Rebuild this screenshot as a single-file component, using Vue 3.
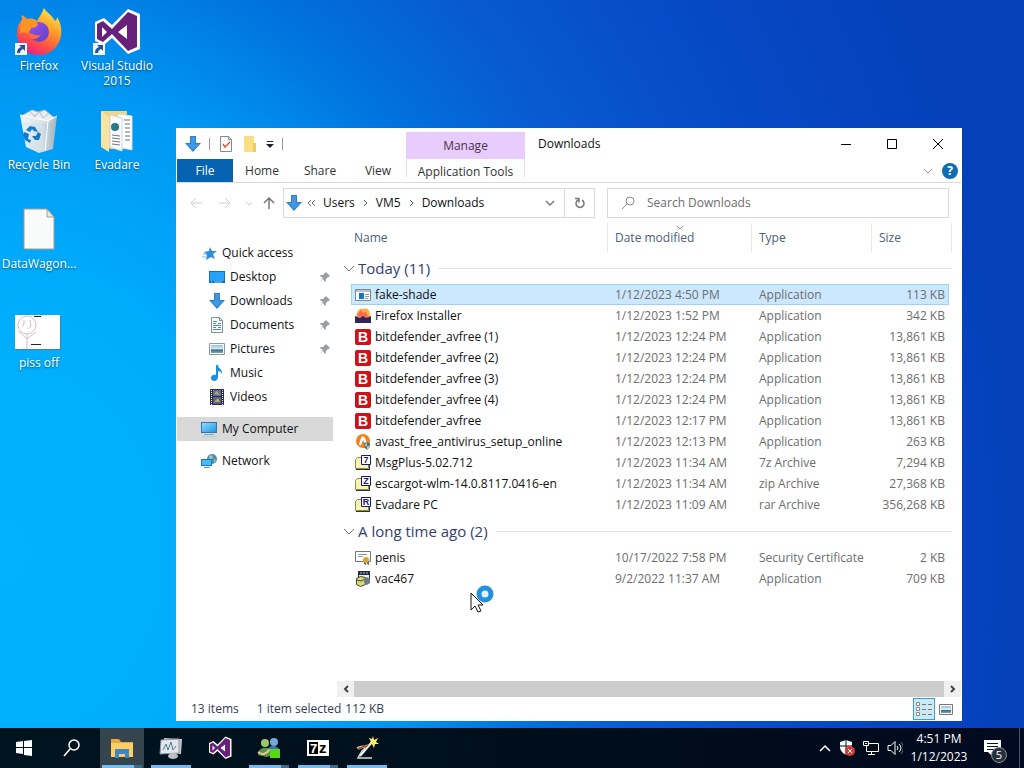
<template>
  <div class="desktop">
    <!-- shared icon shapes -->
    <svg class="sprite" aria-hidden="true">
      <defs>
        <linearGradient id="fox" x1="0.8" y1="0" x2="0.3" y2="1">
          <stop offset="0" stop-color="#fff04a" />
          <stop offset="0.4" stop-color="#ff9a2a" />
          <stop offset="0.75" stop-color="#ff4a4a" />
          <stop offset="1" stop-color="#e8208a" />
        </linearGradient>
        <linearGradient id="globe" x1="0" y1="0" x2="1" y2="1">
          <stop offset="0" stop-color="#a050f0" />
          <stop offset="1" stop-color="#5a40c8" />
        </linearGradient>
        <linearGradient id="bin" x1="0" y1="0" x2="1" y2="0">
          <stop offset="0" stop-color="#f4f5f6" />
          <stop offset="0.6" stop-color="#dfe3e6" />
          <stop offset="1" stop-color="#a9b3ba" />
        </linearGradient>
        <linearGradient id="screen" x1="0" y1="0" x2="1" y2="1">
          <stop offset="0" stop-color="#8fdcff" />
          <stop offset="1" stop-color="#2196e3" />
        </linearGradient>
        <linearGradient id="photo" x1="0" y1="0" x2="0" y2="1">
          <stop offset="0" stop-color="#8fc4ea" />
          <stop offset="0.5" stop-color="#dceaf2" />
          <stop offset="0.6" stop-color="#356b84" />
          <stop offset="1" stop-color="#7fa6b6" />
        </linearGradient>
      </defs>

      <symbol id="i-shortcut" viewBox="0 0 12 12">
        <rect width="12" height="12" fill="#f6f8fb" />
        <path d="M4 2h6v6L8 6C6 7 5 8 5 10H2C2 7 3 5 6 4z" fill="#24509c" />
      </symbol>

      <symbol id="i-firefox" viewBox="0 0 48 48">
        <path d="M29 0c2 4 8 7 11 13 2-1 2-3 2-4 4 6 5 13 4 19-2 11-11 19-22 19C11 47 2 38 2 25c0-6 2-10 5-13 0-2-1-4 0-5 2 1 4 3 5 4 4-1 8 0 10 2 3-5 5-8 7-13z" fill="url(#fox)" />
        <circle cx="24" cy="24" r="10" fill="url(#globe)" />
        <path d="M7 12c6-2 12 0 16 4-1 3-4 4-7 4 0 3-3 3-3 6-3-2-6-2-8 0 0-6 0-10 2-14z" fill="#ff9324" />
        <path d="M13 24c4 2 8 4 13 3-3 4-8 5-11 3z" fill="#ff6a35" />
      </symbol>

      <symbol id="i-vs" viewBox="0 0 48 48">
        <path d="M2 14l9-4 8 7L35 1l12 5v35l-12 5-16-16-8 7-9-4z" fill="#fff" />
        <path d="M4 16l6-3 9 8L35 4l9 4v31l-9 4-16-17-9 8-6-3zM9 19v10l5-5zM34 17l-9 7 9 7z" fill="#68217a" fill-rule="evenodd" />
      </symbol>

      <symbol id="i-recycle" viewBox="0 0 48 48">
        <path d="M8 8l9-5 6 2 7-2 7 6 4 2-2 6-31-2z" fill="#e8edf0" stroke="#aeb9c0" />
        <path d="M15 4l4 5 6-4 3 6 6-5M10 9l6 4 5-4" fill="none" stroke="#b3bec6" />
        <path d="M5 8l28 6 9-5-4 33-14 4-13-6z" fill="url(#bin)" opacity=".94" />
        <path d="M5 8l28 6 9-5M33 14l-3 30" fill="none" stroke="#fff" />
        <path d="M11 23l4-4 5 1 3 5-4-1-2-2-2 3zM20 33l4 0 2-6-3-2-2 4h-4zM9 25l5 2-1 5 3 1-1 3-5-3-2-5z" fill="#1478cc" />
      </symbol>

      <symbol id="i-folder-open" viewBox="0 0 48 48">
        <path d="M8 4h26v38H18L8 38z" fill="#efd585" />
        <path d="M25 7l14 2v34l-14-3z" fill="#fff" stroke="#d8dde0" />
        <path d="M31 13h6m-5 4h5m-5 4h5m-5 4h5m-5 4h5m-5 4h5" stroke="#626c74" />
        <path d="M17 8l12 3v33l-12-4z" fill="#fafafa" stroke="#d2d7d9" />
        <circle cx="22" cy="20" r="4" fill="#27788b" />
        <path d="M19 28l8 1m-8 2l8 1m-8 2l8 1m-8 2l8 1" stroke="#737b80" />
        <path d="M8 4l8 6v35l-8-5z" fill="#f8e4a0" />
      </symbol>

      <symbol id="i-file" viewBox="0 0 48 48">
        <path d="M9 3h23l7 8v32H9z" fill="#f9fbfb" stroke="#a89c90" />
        <path d="M32 3v8h7z" fill="#e7e9ea" stroke="#a89c90" />
      </symbol>

      <symbol id="i-drawing" viewBox="0 0 48 48">
        <path d="M1 12h45v33H1z" fill="#59707c" opacity=".6" />
        <path d="M0 10h45v34H0z" fill="#fff" />
        <g fill="none" stroke="#d8bfc2">
          <circle cx="12" cy="20" r="9" />
          <path d="M9 15v4l-2 3M15 15l1 6-3 3M12 29v15M3 26l9 8 9-7" />
        </g>
        <path d="M19 11.500h7M16 39.500h10" stroke="#222" />
      </symbol>

      <symbol id="i-down" viewBox="0 0 16 16">
        <path d="M5 0h6v7h5l-8 9-8-9h5z" fill="#2b7fd0" />
        <path d="M6 1h4v7h4l-6 6-6-6h4z" fill="#4296e2" />
      </symbol>

      <symbol id="i-check" viewBox="0 0 16 16">
        <path d="M2.500 .5h8l3 3v12h-11z" fill="#fff" stroke="#888" />
        <path d="M10.500 .5v3h3" fill="none" stroke="#888" />
        <path d="M5 8l2 3 5-5" fill="none" stroke="#dd5a3c" stroke-width="1.500" />
      </symbol>

      <symbol id="i-newfolder" viewBox="0 0 16 16">
        <path d="M2 0h10v7l2 1v8H2z" fill="#f8df82" />
        <path d="M11 7h3v9h-3z" fill="#eccb5f" />
      </symbol>

      <symbol id="i-star" viewBox="0 0 16 16">
        <path d="M9 2l2 4 5 0-4 3 2 5-4-2-5 3 1-5-3-3 5-1z" fill="#2b8ddb" />
        <path d="M2 9h4M1 12h4" stroke="#75bbed" />
      </symbol>

      <symbol id="i-desktop" viewBox="0 0 16 16">
        <path d="M0 2h16v12H0z" fill="#1271bd" />
        <path d="M1 3h14v9H1z" fill="#25a2fa" />
        <path d="M2 13h1m2 0h8" stroke="#8ed0ff" />
      </symbol>

      <symbol id="i-docs" viewBox="0 0 16 16">
        <path d="M2.500 .5h8l3 3v12h-11z" fill="#fff" stroke="#7d8f9b" />
        <path d="M4 4.500h4M4 6.500h3m2 0h3M4 8.500h8M4 10.500h3m2 0h3M4 12.500h8" stroke="#4b90b8" />
        <path d="M10.500 .5v3h3" fill="none" stroke="#7d8f9b" />
      </symbol>

      <symbol id="i-pictures" viewBox="0 0 16 16">
        <path d="M.5 2.500h15v11H.5z" fill="#fff" stroke="#8b98a0" />
        <path d="M2 4h12v8H2z" fill="url(#photo)" />
      </symbol>

      <symbol id="i-music" viewBox="0 0 16 16">
        <path d="M7 0h2c0 4 5 4 4 9-1-2-2-3-4-3v6c0 5-7 5-7 1 0-2 2-4 5-3z" fill="#1d8fe0" />
      </symbol>

      <symbol id="i-videos" viewBox="0 0 16 16">
        <path d="M1 0h14v16H1z" fill="#2e3036" />
        <path d="M4 1h8v6H4z" fill="#5a6fb5" />
        <path d="M4 8h8v7H4z" fill="#58609c" />
        <path d="M5 5l3-3 3 4zM5 13l4-4 2 4z" fill="#c3a64c" />
        <path d="M2.500 1v15M13.500 1v15" stroke="#eee" stroke-dasharray="1 1" />
      </symbol>

      <symbol id="i-computer" viewBox="0 0 16 16">
        <path d="M0 1h16v11H0z" fill="#2d78ad" />
        <path d="M1 2h14v9H1z" fill="url(#screen)" />
        <path d="M3 13.500h10" stroke="#7aabc9" />
        <path d="M1 15.500h14" stroke="#b5c9d5" />
      </symbol>

      <symbol id="i-network" viewBox="0 0 16 16">
        <circle cx="11" cy="6" r="5" fill="#518ea8" />
        <path d="M8 3l3-1 1 3-3 2M13 6l2 1-2 3" fill="#9bcac2" />
        <path d="M0 6h11v7H0z" fill="#1d77b8" />
        <path d="M1 7h9v5H1z" fill="#4bbbf5" />
        <path d="M3 14.500h6" stroke="#549ac7" />
      </symbol>

      <symbol id="i-pin" viewBox="0 0 12 12">
        <path d="M7 1l4 4-1 1H9L7 8v2L6 11 4 8 1 11l3-4-3-2 1-1h2l2-2z" fill="#9a9fa3" />
      </symbol>

      <symbol id="i-app" viewBox="0 0 16 16">
        <path d="M.5 2.500h15v11H.5z" fill="#fff" stroke="#7d8790" />
        <path d="M1 3h14v2H1z" fill="#b9c3cb" />
        <path d="M4 6h5v6H4z" fill="#1c70c0" />
        <path d="M10 7.500h4m-4 2h4m-4 2h3" stroke="#8a959d" />
      </symbol>

      <symbol id="i-ffinst" viewBox="0 0 16 16">
        <path d="M2 5C3 1 6 0 8 1c5-2 7 2 7 6v3H1z" fill="#ffad38" />
        <path d="M2 7l4-5 2 3 3-1 2 5-5 3z" fill="#f46b56" />
        <path d="M0 8l5 2 3-2 3 2 5-2v7H0z" fill="#34245e" />
      </symbol>

      <symbol id="i-bitdefender" viewBox="0 0 16 16">
        <rect width="16" height="16" rx="2" fill="#cf1218" />
      </symbol>

      <symbol id="i-avast" viewBox="0 0 16 16">
        <circle cx="8" cy="7" r="7" fill="#f3811d" />
        <path d="M4 10l2-6c1-2 3-2 4 0l2 5-2 1-2-4-2 5c-1 1-2 0-2-1z" fill="#fff" />
        <path d="M9 9l3-1 3 1v4l-3 3-3-3z" fill="#497798" />
        <path d="M12 8v4H9M12 12v4l3-3v-1z" fill="#d8c261" />
      </symbol>

      <symbol id="i-archive" viewBox="0 0 16 16">
        <path d="M.5 4.500l2-2h4v2h7v9h-13z" fill="#f7f6ad" stroke="#8a8b4d" />
        <path d="M1 14.500h13M14.500 10v5" stroke="#333" />
        <path d="M6.500 .5h9v9h-9z" fill="#fff" stroke="#16167c" />
      </symbol>

      <symbol id="i-cert" viewBox="0 0 16 16">
        <path d="M.5 1.500h15v10H.5z" fill="#fff" stroke="#767676" />
        <path d="M3 4.500h9M3 6.500h5" stroke="#999" />
        <path d="M9 11h2v4l-2-1zM12 11h2v4l-2-1z" fill="#4b61a5" />
        <circle cx="11" cy="10" r="3" fill="#e0a528" />
      </symbol>

      <symbol id="i-vac" viewBox="0 0 16 16">
        <path d="M3 0h12v12H3z" fill="#272c3a" />
        <path d="M4 4h10v7H4z" fill="#f4f4f4" />
        <path d="M5 2h2m1 0h2m1 0h2" stroke="#9ab8ff" />
        <path d="M1.500 7.500l4-2 5 1v7l-5 2-4-2z" fill="#d9da7c" stroke="#44472a" />
        <path d="M2 9l4 1 4-2" stroke="#44472a" fill="none" />
        <path d="M9 8l3-2 3 2v4l-3 2-3-2z" fill="#6f7c86" />
      </symbol>

      <symbol id="i-explorer" viewBox="0 0 24 24">
        <path d="M1 3h8l2 3h12v15H1z" fill="#e9a93c" />
        <path d="M1 7h22v14H1z" fill="#fccf66" />
        <path d="M5 22v-9h14v9h-4v-4H9v4z" fill="#3f86c9" />
      </symbol>

      <symbol id="i-perf" viewBox="0 0 24 24">
        <path d="M5 2l18 1-1 15-15-1z" fill="#c3cbd0" />
        <path d="M2 4l18-1v14L1 18z" fill="#e4e8ea" stroke="#8a959c" />
        <path d="M4 14l3-6 2 6 3-8 2 8 3-4" fill="none" stroke="#4d7a92" />
        <ellipse cx="14" cy="20" rx="5" ry="3" fill="#b9c1c6" />
      </symbol>

      <symbol id="i-messenger" viewBox="0 0 24 24">
        <circle cx="17" cy="6" r="4" fill="#73a8dc" />
        <path d="M10 16c0-8 12-8 13 0v4H10z" fill="#3c76b4" />
        <circle cx="8" cy="7" r="4" fill="#9bc86b" />
        <path d="M1 19c0-9 13-10 14 0l-5 2z" fill="#57964a" />
        <path d="M1 16c5 4 10 1 11-3" fill="none" stroke="#efc493" stroke-width="2" />
        <path d="M13 13h10v9H13z" fill="#58d813" />
      </symbol>

      <symbol id="i-7zip" viewBox="0 0 24 24">
        <path d="M1 4h22v16H1z" fill="#fff" />
        <path d="M3 6h9v12H3z" fill="#000" />
      </symbol>

      <symbol id="i-wand" viewBox="0 0 24 24">
        <path d="M2 12c6-3 11-2 5 3l-4 7h14" fill="none" stroke="#d8d8d8" stroke-width="1.500" />
        <path d="M5 20L17 6" stroke="#f0f0f0" stroke-width="2" />
        <path d="M3 13L13 9" stroke="#a8602e" stroke-width="2" />
        <path d="M18 0l1 4 4-2-2 4 3 2-4 0-1 4-2-4-3 1 2-3-2-4 3 1z" fill="#fff26b" />
      </symbol>
    </svg>

    <main class="workspace">
      <div class="shortcuts">
        <div v-for="(column, c) in shortcuts" :key="c" class="shortcut-column">
          <button v-for="item in column" :key="item.label" class="shortcut" type="button">
            <span class="shortcut-icon">
              <svg width="48" height="48"><use :href="'#i-' + item.icon" /></svg>
              <svg v-if="item.link" class="link-mark" width="12" height="12"><use href="#i-shortcut" /></svg>
            </span>
            <span class="shortcut-label">{{ item.label }}</span>
          </button>
        </div>
      </div>

      <section class="window" aria-label="Downloads">
        <header class="titlebar">
          <div class="quick-tools">
            <svg width="16" height="16"><use href="#i-down" /></svg>
            <i class="bar"></i>
            <button type="button" aria-label="Properties"><svg width="16" height="16"><use href="#i-check" /></svg></button>
            <button type="button" aria-label="New folder"><svg width="16" height="16"><use href="#i-newfolder" /></svg></button>
            <button type="button" aria-label="Customize toolbar">
              <svg width="8" height="8"><path d="M1 1.500h6" stroke="#222" /><path d="M0 4h8L4 8z" fill="#222" /></svg>
            </button>
            <i class="bar"></i>
          </div>
          <div class="manage">Manage</div>
          <h1>Downloads</h1>
          <div class="captions">
            <button type="button" aria-label="Minimize"><svg width="12" height="12"><path d="M1 6.500h10" stroke="#000" /></svg></button>
            <button type="button" aria-label="Maximize"><svg width="12" height="12"><path d="M1.500 1.500h9v9h-9z" fill="none" stroke="#000" /></svg></button>
            <button type="button" aria-label="Close"><svg width="12" height="12"><path d="M1 1l10 10M11 1L1 11" stroke="#000" /></svg></button>
          </div>
        </header>

        <nav class="ribbon">
          <button class="tab file" type="button">File</button>
          <button class="tab" type="button">Home</button>
          <button class="tab" type="button">Share</button>
          <button class="tab" type="button">View</button>
          <button class="tab tools" type="button">Application Tools</button>
          <div class="ribbon-end">
            <svg width="10" height="6"><path d="M1 1l4 4 4-4" fill="none" stroke="#9a9a9a" /></svg>
            <button class="help" type="button">?</button>
          </div>
        </nav>

        <div class="navigation">
          <div class="arrows">
            <button type="button" aria-label="Back"><svg width="12" height="12"><path d="M6 1L1 6l5 5M1 6h11" fill="none" stroke="#cfcfcf" /></svg></button>
            <button type="button" aria-label="Forward"><svg width="12" height="12"><path d="M6 1l5 5-5 5M0 6h11" fill="none" stroke="#cfcfcf" /></svg></button>
            <button class="recent" type="button" aria-label="Recent"><svg width="6" height="6"><path d="M0 2l3 3 3-3" fill="none" stroke="#cfcfcf" /></svg></button>
            <button type="button" aria-label="Up"><svg width="12" height="12"><path d="M1 6l5-5 5 5M6 1v11" fill="none" stroke="#777" stroke-width="1.500" /></svg></button>
          </div>
          <div class="address">
            <svg width="16" height="16"><use href="#i-down" /></svg>
            <svg class="laquo" width="8" height="8"><path d="M4 1L1 4l3 3M8 1L5 4l3 3" fill="none" stroke="#666" /></svg>
            <button v-for="crumb in crumbs" :key="crumb" class="crumb" type="button">
              {{ crumb }}
              <svg v-if="crumb !== 'Downloads'" width="5" height="8"><path d="M1 1l3 3-3 3" fill="none" stroke="#555" /></svg>
            </button>
            <button class="history" type="button" aria-label="Previous locations">
              <svg width="10" height="8"><path d="M1 2l4 4 4-4" fill="none" stroke="#777" stroke-width="1.500" /></svg>
            </button>
            <button class="refresh" type="button" aria-label="Refresh">
              <svg width="12" height="12"><path d="M8 3A4 4 0 1 1 4 3M1 1.500h4v4" fill="none" stroke="#777" stroke-width="1.500" /></svg>
            </button>
          </div>
          <label class="search">
            <svg width="14" height="14"><circle cx="9" cy="5" r="4" fill="none" stroke="#8a8a8a" /><path d="M6 8l-5 5" stroke="#8a8a8a" /></svg>
            <input v-model="query" type="text" placeholder="Search Downloads" aria-label="Search Downloads" />
          </label>
        </div>

        <div class="content">
          <aside class="sidebar">
            <div v-for="(group, g) in places" :key="g" class="place-group">
              <a
                v-for="place in group"
                :key="place.label"
                href="#"
                class="place"
                :class="{ child: place.child, current: place.label === 'My Computer' }"
              >
                <svg width="16" height="16"><use :href="'#i-' + place.icon" /></svg>
                <span>{{ place.label }}</span>
                <svg v-if="place.pinned" class="pin" width="12" height="12"><use href="#i-pin" /></svg>
              </a>
            </div>
          </aside>

          <div class="files">
            <div class="listing">
              <table>
                <colgroup>
                  <col class="c-gutter" />
                  <col />
                  <col class="c-date" />
                  <col class="c-type" />
                  <col class="c-size" />
                  <col class="c-end" />
                </colgroup>
                <thead>
                  <tr>
                    <th colspan="2" class="h-name">Name</th>
                    <th>
                      Date modified
                      <svg class="sort" width="8" height="5"><path d="M1 1l3 3 3-3" fill="none" stroke="#888" /></svg>
                    </th>
                    <th>Type</th>
                    <th colspan="2">Size</th>
                  </tr>
                </thead>
                <tbody v-for="group in groups" :key="group.title">
                  <tr class="group-row">
                    <th colspan="6">
                      <div class="group-title">
                        <svg width="11" height="7"><path d="M1 1l5 5 5-5" fill="none" stroke="#777" /></svg>
                        <span>{{ group.title }} ({{ group.files.length }})</span>
                        <i></i>
                      </div>
                    </th>
                  </tr>
                  <tr v-for="file in group.files" :key="file.name" class="file-row" :class="{ selected: file.name === selected }" @click="selected = file.name">
                    <td></td>
                    <td class="name">
                      <div class="name-inner">
                        <svg width="16" height="16">
                          <use :href="'#i-' + file.icon" />
                          <text v-if="file.icon === 'bitdefender'" x="8" y="13" class="glyph-b">B</text>
                          <text v-if="file.mark" x="11" y="8" class="glyph-mark">{{ file.mark }}</text>
                        </svg>
                        <span>{{ file.name }}</span>
                      </div>
                    </td>
                    <td class="cell">{{ file.date }}</td>
                    <td class="cell">{{ file.type }}</td>
                    <td class="size">{{ file.size }} KB</td>
                    <td></td>
                  </tr>
                </tbody>
              </table>
            </div>
            <div class="scrollbar">
              <button type="button" aria-label="Scroll left"><svg width="6" height="8"><path d="M5 1L2 4l3 3" fill="none" stroke="#444" stroke-width="2" /></svg></button>
              <div class="thumb"></div>
              <button type="button" aria-label="Scroll right"><svg width="6" height="8"><path d="M1 1l3 3-3 3" fill="none" stroke="#444" stroke-width="2" /></svg></button>
            </div>
          </div>
        </div>

        <footer class="status">
          <span class="count">13 items</span>
          <span>1 item selected</span>
          <span class="bytes">112 KB</span>
          <div class="views">
            <button class="view active" type="button" aria-label="Details">
              <svg width="16" height="14"><path d="M.5 .5h3v3h-3zM.5 5.500h3v3h-3zM.5 10.500h3v3h-3z" fill="#fff" stroke="#888" /><path d="M6 2.500h4m2 0h4M6 7.500h4m2 0h4M6 12.500h4m2 0h4" stroke="#777" /></svg>
            </button>
            <button class="view" type="button" aria-label="Large icons">
              <svg width="14" height="11"><path d="M.5 .5h13v10H.5z" fill="#fff" stroke="#777" /><path d="M2 2h10v7H2z" fill="url(#photo)" /></svg>
            </button>
          </div>
        </footer>
      </section>

      <svg class="pointer" width="28" height="30">
        <circle cx="15" cy="9" r="6" fill="#dff3ff" stroke="#2490dc" stroke-width="5" />
        <path d="M1 8v17l4-4 3 6 3-1-3-6h5z" fill="#fff" stroke="#111" />
      </svg>
    </main>

    <footer class="taskbar">
      <button class="task plain" type="button" aria-label="Start">
        <svg width="18" height="18"><path d="M1 3l7-1v6H1zM9 2l8-1v7H9zM1 9h7v6l-7-1zM9 9h8v8l-8-1z" fill="#fff" /></svg>
      </button>
      <button class="task plain" type="button" aria-label="Search">
        <svg width="18" height="18"><circle cx="11" cy="6" r="5" fill="none" stroke="#fff" stroke-width="1.500" /><path d="M7 10l-6 7" stroke="#fff" stroke-width="1.500" /></svg>
      </button>
      <div class="tasks">
        <button v-for="task in tasks" :key="task.icon" class="task" :class="task.state" type="button" :aria-label="task.label">
          <svg width="24" height="24">
            <use :href="'#i-' + task.icon" />
            <template v-if="task.icon === '7zip'">
              <text x="4" y="17" class="glyph-7">7</text>
              <text x="13" y="17" class="glyph-z">z</text>
            </template>
          </svg>
        </button>
      </div>
      <div class="tray">
        <svg width="12" height="8"><path d="M1 7l5-5 5 5" fill="none" stroke="#fff" stroke-width="1.500" /></svg>
        <svg width="16" height="16">
          <path d="M1 2l6-2 6 2v5c0 4-3 6-6 8-3-2-6-4-6-8z" fill="#fff" />
          <path d="M7 0v15M1 6h12" stroke="#001020" />
          <circle cx="11" cy="11" r="5" fill="#d83b33" />
          <path d="M9 9l4 4M13 9l-4 4" stroke="#fff" />
        </svg>
        <svg width="16" height="16"><path d="M6 3.500h9.500v8H3.500V6M8.500 12v3M5 14.500h7M.5 1.500h5v4h-5zM2 3.500h2" fill="none" stroke="#fff" /></svg>
        <svg width="16" height="16"><path d="M1 5.500h3l4-4v13l-4-4H1z" fill="none" stroke="#fff" /><path d="M10 6q2 2 0 4M12 4q4 4 0 8" fill="none" stroke="#fff" /><path d="M14 2q5 6 0 12" fill="none" stroke="#777" /></svg>
      </div>
      <div class="clock"><span>4:51 PM</span><span>1/12/2023</span></div>
      <button class="notifications" type="button" aria-label="Notifications">
        <svg width="17" height="16"><path d="M0 0h17v12H8v4l-4-4H0z" fill="#fff" /><path d="M3 3.500h11M3 6.500h11M3 9.500h7" stroke="#08131f" /></svg>
        <span class="badge">5</span>
      </button>
      <i class="peek"></i>
    </footer>
  </div>
</template>

<script setup>
import { ref } from 'vue';

const query = ref('');
const selected = ref('fake-shade');

const crumbs = ['Users', 'VM5', 'Downloads'];

const shortcuts = [
  [
    { label: 'Firefox', icon: 'firefox', link: true },
    { label: 'Recycle Bin', icon: 'recycle' },
    { label: 'DataWagon...', icon: 'file' },
    { label: 'piss off', icon: 'drawing' }
  ],
  [
    { label: 'Visual Studio 2015', icon: 'vs', link: true },
    { label: 'Evadare', icon: 'folder-open' }
  ]
];

const places = [
  [
    { label: 'Quick access', icon: 'star' },
    { label: 'Desktop', icon: 'desktop', child: true, pinned: true },
    { label: 'Downloads', icon: 'down', child: true, pinned: true },
    { label: 'Documents', icon: 'docs', child: true, pinned: true },
    { label: 'Pictures', icon: 'pictures', child: true, pinned: true },
    { label: 'Music', icon: 'music', child: true },
    { label: 'Videos', icon: 'videos', child: true }
  ],
  [{ label: 'My Computer', icon: 'computer' }],
  [{ label: 'Network', icon: 'network' }]
];

const groups = [
  {
    title: 'Today',
    files: [
      { name: 'fake-shade', icon: 'app', date: '1/12/2023 4:50 PM', type: 'Application', size: '113' },
      { name: 'Firefox Installer', icon: 'ffinst', date: '1/12/2023 1:52 PM', type: 'Application', size: '342' },
      { name: 'bitdefender_avfree (1)', icon: 'bitdefender', date: '1/12/2023 12:24 PM', type: 'Application', size: '13,861' },
      { name: 'bitdefender_avfree (2)', icon: 'bitdefender', date: '1/12/2023 12:24 PM', type: 'Application', size: '13,861' },
      { name: 'bitdefender_avfree (3)', icon: 'bitdefender', date: '1/12/2023 12:24 PM', type: 'Application', size: '13,861' },
      { name: 'bitdefender_avfree (4)', icon: 'bitdefender', date: '1/12/2023 12:24 PM', type: 'Application', size: '13,861' },
      { name: 'bitdefender_avfree', icon: 'bitdefender', date: '1/12/2023 12:17 PM', type: 'Application', size: '13,861' },
      { name: 'avast_free_antivirus_setup_online', icon: 'avast', date: '1/12/2023 12:13 PM', type: 'Application', size: '263' },
      { name: 'MsgPlus-5.02.712', icon: 'archive', mark: '7', date: '1/12/2023 11:34 AM', type: '7z Archive', size: '7,294' },
      { name: 'escargot-wlm-14.0.8117.0416-en', icon: 'archive', mark: 'Z', date: '1/12/2023 11:34 AM', type: 'zip Archive', size: '27,368' },
      { name: 'Evadare PC', icon: 'archive', mark: 'R', date: '1/12/2023 11:09 AM', type: 'rar Archive', size: '356,268' }
    ]
  },
  {
    title: 'A long time ago',
    files: [
      { name: 'penis', icon: 'cert', date: '10/17/2022 7:58 PM', type: 'Security Certificate', size: '2' },
      { name: 'vac467', icon: 'vac', date: '9/2/2022 11:37 AM', type: 'Application', size: '709' }
    ]
  }
];

const tasks = [
  { icon: 'explorer', label: 'File Explorer', state: 'open active stacked' },
  { icon: 'perf', label: 'Performance', state: 'open' },
  { icon: 'vs', label: 'Visual Studio', state: '' },
  { icon: 'messenger', label: 'Messenger', state: 'open stacked' },
  { icon: '7zip', label: '7-Zip', state: 'open stacked' },
  { icon: 'wand', label: 'Resource tool', state: 'open' }
];
</script>

<style>
body {
  margin: 0;
}
</style>

<style scoped>
.desktop {
  display: flex;
  flex-direction: column;
  min-height: 100vh;
  font-family: "Open Sans", "Noto Sans", sans-serif;
  font-size: 12px;
  line-height: 16px;
  color: #111;
  background: radial-gradient(ellipse 100% 155% at 0% 72%, #00b2ff 0%, #00adfd 22%, #0098f2 40%, #0074de 52%, #085ad0 64%, #064ac6 80%, #0540b8 100%);
}

.desktop *,
.desktop *::after {
  box-sizing: border-box;
}

.sprite {
  position: absolute;
  width: 0;
  height: 0;
}

svg {
  display: block;
  flex: none;
}

button {
  padding: 0;
  border: 0;
  background: none;
  font: inherit;
  color: inherit;
}

a {
  color: inherit;
  text-decoration: none;
}

.workspace {
  position: relative;
  flex: 1;
}

.shortcuts {
  display: flex;
}

.shortcut-column {
  width: 78px;
}

.shortcut {
  display: flex;
  flex-direction: column;
  align-items: center;
  width: 100%;
  height: 99px;
  padding-top: 8px;
}

.shortcut-icon {
  position: relative;
}

.link-mark {
  position: absolute;
  left: 0;
  bottom: 1px;
}

.shortcut-label {
  margin-top: 2px;
  line-height: 15px;
  color: #fff;
  text-shadow: 0 1px 2px rgba(0, 0, 0, 0.5);
}

.window {
  position: absolute;
  top: 128px;
  right: 62px;
  bottom: 7px;
  left: 176px;
  display: flex;
  flex-direction: column;
  padding: 0 1px;
  background: #fff;
}

.titlebar {
  display: flex;
  height: 31px;
}

.quick-tools {
  display: flex;
  align-items: center;
  gap: 8px;
  width: 229px;
  padding-left: 8px;
}

.bar {
  width: 1px;
  height: 12px;
  background: #999;
}

.manage {
  width: 119px;
  margin-top: 4px;
  line-height: 28px;
  text-align: center;
  color: #4a3550;
  background: #e8ccfb;
}

h1 {
  flex: 1;
  margin: 0 0 0 13px;
  font-size: 12px;
  font-weight: 400;
  line-height: 31px;
}

.captions {
  display: flex;
}

.captions button {
  display: grid;
  place-items: center;
  width: 46px;
}

.ribbon {
  display: flex;
  height: 24px;
  border-bottom: 1px solid #dadbdc;
}

.tab {
  width: 58px;
  color: #333;
}

.tab.file {
  width: 56px;
  color: #fff;
  background: #0563b1;
}

.tab.tools {
  width: 119px;
  height: 18px;
  margin-left: -1px;
  padding-top: 5px;
  border: solid #e3d9e8;
  border-width: 0 1px;
}

.ribbon-end {
  display: flex;
  align-items: center;
  gap: 9px;
  margin-left: auto;
  padding-right: 3px;
}

.help {
  width: 16px;
  height: 16px;
  border-radius: 50%;
  font-weight: 700;
  color: #fff;
  background: #0f6cb5;
}

.navigation {
  display: flex;
  padding: 5px 12px 5px 0;
}

.arrows {
  display: flex;
  align-items: center;
  gap: 17px;
  width: 106px;
  padding-left: 13px;
}

.recent {
  margin: 0 -6px 0 -2px;
}

.address,
.search {
  display: flex;
  align-items: center;
  height: 30px;
  border: 1px solid #d9d9d9;
}

.address {
  flex: 308;
  padding-left: 2px;
}

.laquo {
  margin: 0 8px 0 5px;
}

.crumb {
  display: flex;
  align-items: center;
  gap: 8px;
  margin-right: 8px;
}

.history {
  margin: 0 9px 0 auto;
}

.refresh {
  display: grid;
  place-items: center;
  width: 30px;
  height: 28px;
  border-left: 1px solid #d9d9d9;
}

.search {
  flex: 327;
  gap: 12px;
  margin-left: 12px;
  padding-left: 13px;
}

.search input {
  flex: 1;
  min-width: 0;
  padding: 0;
  border: 0;
  outline: 0;
  font: inherit;
  background: none;
}

.search input::placeholder {
  color: #6d6d6d;
  opacity: 1;
}

.content {
  display: flex;
  flex: 1;
}

.sidebar {
  width: 156px;
  padding-top: 18px;
}

.place-group {
  margin-bottom: 8px;
}

.place {
  display: flex;
  align-items: center;
  gap: 5px;
  height: 24px;
  padding: 0 2px 0 24px;
}

.place.child {
  padding-left: 32px;
}

.place.current {
  background: #d9d9d9;
}

.pin {
  margin-left: auto;
}

.files {
  display: flex;
  flex: 1;
  flex-direction: column;
  margin-left: 4px;
}

.listing {
  flex: 1;
  padding: 0 9px 0 4px;
}

table {
  width: 100%;
  table-layout: fixed;
  border-collapse: separate;
  border-spacing: 0;
}

.c-gutter {
  width: 10px;
}

.c-date {
  width: 144px;
}

.c-type {
  width: 120px;
}

.c-size {
  width: 77px;
}

.c-end {
  width: 3px;
}

thead th {
  position: relative;
  height: 29px;
  padding: 0 0 0 7px;
  border-right: 1px solid #e8e8e8;
  font-weight: 400;
  text-align: left;
  color: #4c607a;
}

thead .h-name {
  padding-left: 13px;
}

.sort {
  position: absolute;
  top: 2px;
  left: 68px;
}

.group-row th {
  height: 32px;
  padding: 0;
}

.group-title {
  display: flex;
  align-items: center;
  gap: 4px;
  padding-left: 2px;
  font-size: 15px;
  font-weight: 400;
  line-height: 20px;
  color: #33406f;
}

.group-title i {
  flex: 1;
  height: 1px;
  margin-left: 4px;
  background: #e2e2e2;
}

.file-row td {
  height: 21px;
  padding: 0;
  white-space: nowrap;
}

.name-inner {
  display: flex;
  align-items: center;
  gap: 4px;
  padding-left: 4px;
}

.file-row .cell {
  padding-left: 7px;
  color: #6d6d6d;
}

.file-row .size {
  padding-right: 4px;
  text-align: right;
  color: #6d6d6d;
}

.selected td:not(:first-child):not(:last-child) {
  background: #cce8ff;
  box-shadow: inset 0 1px #99d1ff, inset 0 -1px #99d1ff;
}

.selected .name {
  border-left: 1px solid #99d1ff;
}

.selected .name-inner {
  padding-left: 3px;
}

.selected .size {
  border-right: 1px solid #99d1ff;
}

.file-row.selected .size {
  padding-right: 3px;
}

.glyph-b,
.glyph-7,
.glyph-z,
.glyph-mark {
  font-family: "Liberation Sans", sans-serif;
  font-weight: 700;
}

.glyph-b {
  font-size: 14px;
  text-anchor: middle;
  fill: #fff;
}

.glyph-7 {
  font-size: 13px;
  fill: #fff;
}

.glyph-z {
  font-size: 15px;
  fill: #000;
}

.glyph-mark {
  font-size: 9px;
  text-anchor: middle;
  fill: #16167c;
}

.scrollbar {
  display: flex;
  height: 16px;
  background: #f0f0f0;
}

.scrollbar button {
  display: grid;
  place-items: center;
  width: 17px;
}

.thumb {
  flex: 1;
  background: #cdcdcd;
}

.status {
  display: flex;
  align-items: center;
  height: 24px;
  padding: 0 6px 0 14px;
  color: #333d5a;
}

.count {
  margin-right: 18px;
}

.bytes {
  margin-left: 4px;
}

.views {
  display: flex;
  gap: 2px;
  margin-left: auto;
}

.view {
  display: grid;
  place-items: center;
  width: 18px;
  height: 22px;
}

.view.active {
  width: 22px;
  border: 1px solid #3aa0cf;
  background: #cbeaf6;
}

.pointer {
  position: absolute;
  top: 585px;
  left: 470px;
}

.taskbar {
  display: flex;
  height: 40px;
  color: #fff;
  background: linear-gradient(90deg, #001420, #000d1a 60%, #000a20);
}

.task {
  position: relative;
  display: grid;
  place-items: center;
  width: 44px;
  height: 40px;
}

.task.plain {
  width: 48px;
}

.tasks {
  display: flex;
  flex: 1;
  gap: 5px;
  padding-left: 4px;
}

.task.active {
  background: #36444e;
}

.task.open::after {
  content: "";
  position: absolute;
  right: 2px;
  bottom: 0;
  left: 2px;
  height: 3px;
  background: #76b9ed;
}

.task.stacked::after {
  background: linear-gradient(90deg, #76b9ed 80%, #41698a 80%);
}

.tray {
  display: flex;
  align-items: center;
  gap: 8px;
}

.clock {
  display: flex;
  flex-direction: column;
  justify-content: center;
  width: 72px;
  line-height: 18px;
  text-align: center;
}

.notifications {
  position: relative;
  display: grid;
  place-items: center;
  width: 34px;
}

.badge {
  position: absolute;
  right: 2px;
  bottom: 5px;
  width: 16px;
  height: 16px;
  border: 1px solid #85909a;
  border-radius: 50%;
  font-size: 11px;
  line-height: 14px;
  background: #26313c;
}

.peek {
  width: 1px;
  margin: 0 4px 0 10px;
  background: #46525f;
}
</style>
